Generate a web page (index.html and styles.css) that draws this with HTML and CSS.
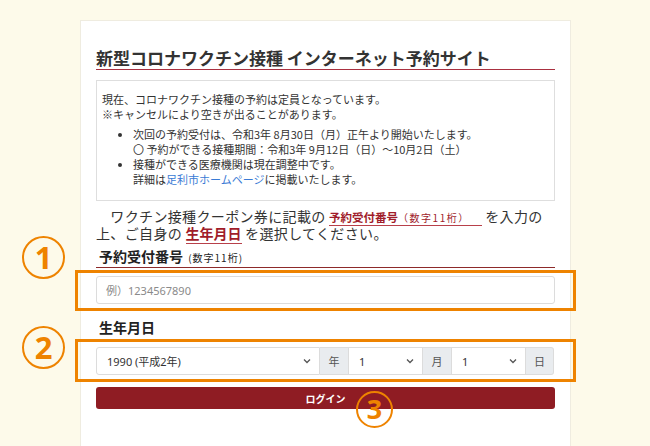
FILE: index.html
```html
<!DOCTYPE html>
<html lang="ja">
<head>
<meta charset="utf-8">
<title>新型コロナワクチン接種 インターネット予約サイト</title>
<link rel="stylesheet" href="styles.css">
</head>
<body>
<div class="page">
  <main class="card">
    <h1 class="title">新型コロナワクチン接種 インターネット予約サイト</h1>
    <div class="notice">
      <p>現在、コロナワクチン接種の予約は定員となっています。<br>※キャンセルにより空きが出ることがあります。</p>
      <ul>
        <li>次回の予約受付は、令和3年 8月30日（月）正午より開始いたします。<br>〇 予約ができる接種期間：令和3年 9月12日（日）～10月2日（土）</li>
        <li>接種ができる医療機関は現在調整中です。<br>詳細は<a href="#">足利市ホームページ</a>に掲載いたします。</li>
      </ul>
    </div>
    <p class="lead">　ワクチン接種クーポン券に記載の <span class="em em-sm">予約受付番号<small>（数字11桁）</small></span> を入力の上、ご自身の <span class="em">生年月日</span> を選択してください。</p>

    <div class="field">
      <label class="label label-line" for="num">予約受付番号 <small>(数字11桁)</small></label>
      <div class="mark">
        <span class="hl"></span>
        <span class="circle c1">1</span>
        <input id="num" class="input" type="text" placeholder="例）1234567890">
      </div>
    </div>

    <div class="field">
      <label class="label" for="year">生年月日</label>
      <div class="mark">
        <span class="hl hl2"></span>
        <span class="circle c2">2</span>
        <div class="group">
          <select id="year" class="sel sel-year"><option>1990 (平成2年)</option></select>
          <span class="addon">年</span>
          <select class="sel sel-sm"><option>1</option></select>
          <span class="addon">月</span>
          <select class="sel sel-sm"><option>1</option></select>
          <span class="addon">日</span>
        </div>
      </div>
    </div>

    <div class="mark mark-btn">
      <button class="btn" type="button">ログイン</button>
      <span class="circle c3">3</span>
    </div>
  </main>
</div>
</body>
</html>
```

FILE: styles.css
```css
* { box-sizing: border-box; }
html, body { margin: 0; padding: 0; }
body {
  background: #fdfaea;
  font-family: "Noto Sans CJK JP", "Noto Sans", sans-serif;
  color: #333;
  height: 446px;
  overflow: hidden;
}
.page {
  padding: 20px 0 0 80px;
}
.card {
  width: 491px;
  min-height: 440px;
  background: #fff;
  border: 1px solid #efece0;
  padding: 26px 15px 30px 15px;
}
.title {
  margin: 0;
  font-size: 17px;
  line-height: 22px;
  font-weight: 700;
  color: #333;
  border-bottom: 1px solid #a93040;
}
.notice {
  margin-top: 10px;
  border: 1px solid #dedede;
  padding: 11px 5px 12px;
  font-size: 11px;
  line-height: 15px;
  color: #333;
  height: 121px;
}
.notice p { margin: 0; }
.notice ul {
  margin: 5px 0 0;
  padding-left: 31px;
}
.notice a { color: #3a7bd5; text-decoration: none; }
.lead {
  margin: 7px 0 0;
  font-size: 14px;
  line-height: 17px;
  letter-spacing: 0.35px;
  color: #333;
}
.em {
  color: #a01c2a;
  font-weight: 700;
  line-height: 1;
  border-bottom: 1px solid #b8404a;
  letter-spacing: 0;
}
.em-sm { font-size: 11.5px; padding-right: 12px; }
.em small {
  font-size: 10px;
  font-weight: 400;
  letter-spacing: 1.5px;
  line-height: 1;
}
.field { margin-top: 5px; }
.field + .field { margin-top: 14px; }
.label {
  display: block;
  font-size: 14px;
  line-height: 18px;
  font-weight: 700;
  color: #222;
  padding-left: 3px;
}
.label small {
  font-size: 10px;
  font-weight: 400;
  letter-spacing: 1px;
  margin-left: 2px;
}
.label-line {
  border-bottom: 1px solid #8d2a2a;
}
.mark {
  position: relative;
  margin-top: 8px;
}
.field + .field .mark { margin-top: 11px; }
.mark-btn { margin-top: 12px; }
.hl {
  position: absolute;
  left: -21px;
  right: -21px;
  top: -6px;
  bottom: -7px;
  border: 3px solid #ee8300;
  pointer-events: none;
  z-index: 2;
}
.hl2 { top: -8px; bottom: -7px; }
.circle {
  position: absolute;
  width: 43px;
  height: 43px;
  border: 2px solid #ee8300;
  border-radius: 50%;
  color: #ee8300;
  font-family: "Open Sans", "Noto Sans", sans-serif;
  font-weight: 700;
  font-size: 31px;
  line-height: 38px;
  text-align: center;
  z-index: 3;
}
.c1 { left: -74px; top: -40px; }
.c2 { left: -74px; top: -21px; }
.c3 { left: 260px; top: 4px; width: 37px; height: 37px; font-size: 27px; line-height: 32px; }
.input {
  display: block;
  width: 100%;
  height: 28px;
  border: 1px solid #dcdcdc;
  border-radius: 3px;
  padding: 0 9px;
  font-family: "Noto Sans", "Noto Sans CJK JP", sans-serif;
  font-size: 11px;
  color: #333;
  background: #fff;
}
.input::placeholder { color: #8a8a8a; }
.group {
  display: flex;
  height: 28px;
}
.sel {
  appearance: none;
  -webkit-appearance: none;
  height: 100%;
  border: 1px solid #dcdcdc;
  border-radius: 0;
  background: #fff url("data:image/svg+xml;utf8,<svg xmlns='http://www.w3.org/2000/svg' width='8' height='6' viewBox='0 0 8 6'><path d='M1 1.5l3 3 3-3' fill='none' stroke='%23555' stroke-width='1.3'/></svg>") no-repeat right 8px center;
  font-family: "Noto Sans", "Noto Sans CJK JP", sans-serif;
  font-size: 11px;
  color: #333;
  padding: 0 20px 0 10px;
}
.sel-year { width: 224px; border-radius: 3px 0 0 3px; }
.sel-sm { width: 75px; }
.addon {
  display: flex;
  align-items: center;
  justify-content: center;
  width: 28px;
  background: #e9ecef;
  border: 1px solid #dcdcdc;
  border-left: 0;
  border-right: 0;
  font-size: 11px;
  color: #555;
}
.addon:last-child { border-right: 1px solid #dcdcdc; border-radius: 0 3px 3px 0; }
.btn {
  display: block;
  width: 100%;
  height: 22px;
  border: 0;
  border-radius: 3px;
  background: #8f1c23;
  color: #fff;
  font-family: "Noto Sans CJK JP", sans-serif;
  font-size: 10px;
  font-weight: 700;
  padding: 0;
}
```
